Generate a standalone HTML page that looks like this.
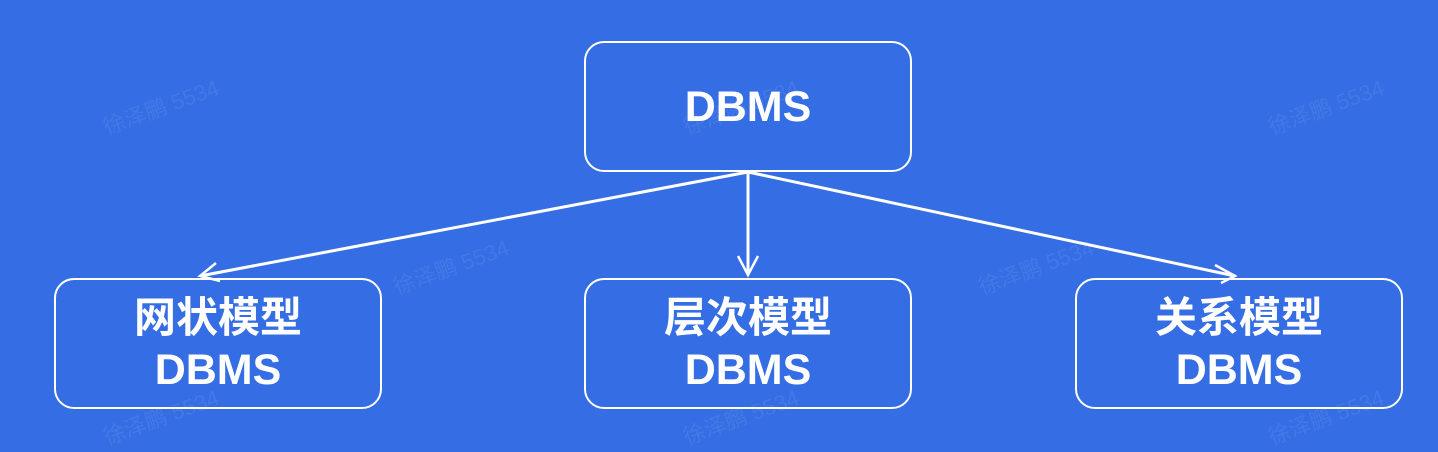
<!DOCTYPE html>
<html><head><meta charset="utf-8"><style>
html,body{margin:0;padding:0;}
body{width:1438px;height:452px;background:#346de4;position:relative;overflow:hidden;font-family:"Liberation Sans","Noto Sans CJK SC",sans-serif;}
.b{position:absolute;box-sizing:border-box;width:328px;height:131px;border:2px solid #fff;border-radius:20px;color:#fff;font-weight:bold;text-align:center;display:flex;flex-direction:column;justify-content:center;}
.c{font-size:42px;line-height:52px;}
.d{font-size:43px;line-height:52px;}
.w{position:absolute;color:rgba(255,255,255,0.08);font-size:22px;transform:rotate(-20deg);white-space:nowrap;}
</style></head><body>
<div class="w" style="left:100px;top:90px">徐泽鹏 5534</div>
<div class="w" style="left:390px;top:250px">徐泽鹏 5534</div>
<div class="w" style="left:680px;top:90px">徐泽鹏 5534</div>
<div class="w" style="left:975px;top:250px">徐泽鹏 5534</div>
<div class="w" style="left:1265px;top:90px">徐泽鹏 5534</div>
<div class="w" style="left:100px;top:400px">徐泽鹏 5534</div>
<div class="w" style="left:680px;top:400px">徐泽鹏 5534</div>
<div class="w" style="left:1265px;top:400px">徐泽鹏 5534</div>
<svg width="1438" height="452" style="position:absolute;left:0;top:0" fill="none" stroke="#fff" stroke-width="3">
<line x1="748" y1="172" x2="200" y2="276"/>
<line x1="748" y1="172" x2="748" y2="274"/>
<line x1="748" y1="172" x2="1235" y2="276"/>
<polyline points="216,263 200,276 220,281" stroke-width="2.5"/>
<polyline points="738,256 748,275 758,256" stroke-width="2.5"/>
<polyline points="1215,265 1235,276 1221,283" stroke-width="2.5"/>
</svg>
<div class="b" style="left:584px;top:41px"><div class="d">DBMS</div></div>
<div class="b" style="left:54px;top:278px"><div class="c">网状模型</div><div class="d">DBMS</div></div>
<div class="b" style="left:584px;top:278px"><div class="c">层次模型</div><div class="d">DBMS</div></div>
<div class="b" style="left:1075px;top:278px"><div class="c">关系模型</div><div class="d">DBMS</div></div>
</body></html>
